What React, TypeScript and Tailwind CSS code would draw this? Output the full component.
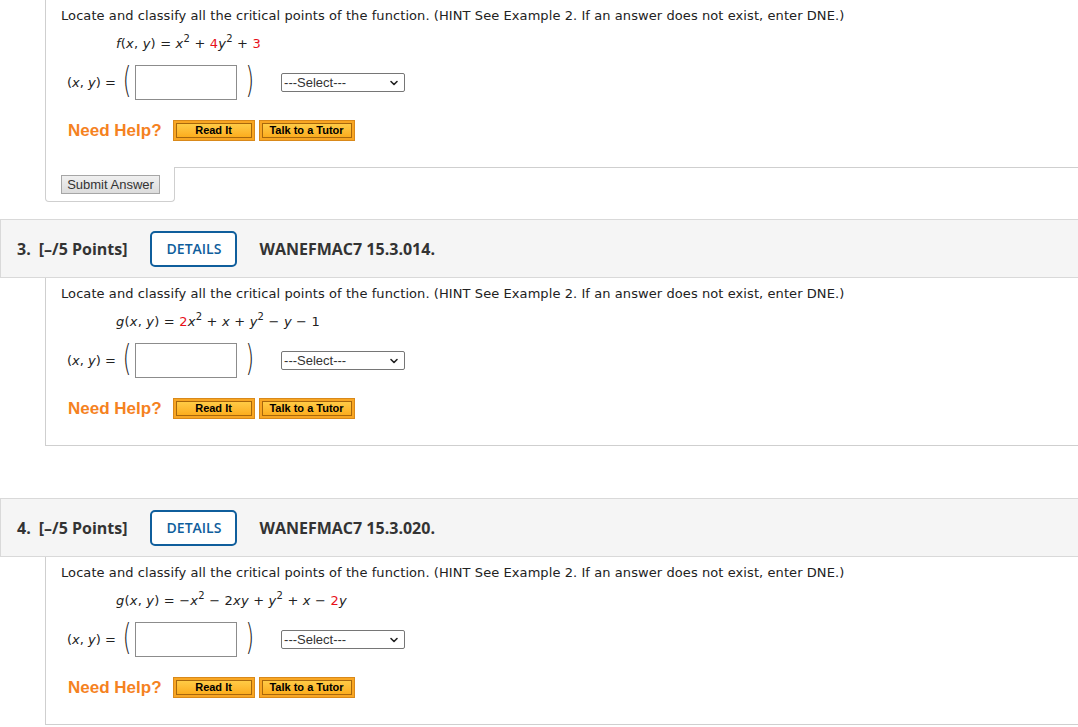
import React from 'react';
import { ChevronDown } from 'lucide-react';

const verdana = { fontFamily: '"DejaVu Sans", Verdana, sans-serif' };

const Red: React.FC<{ children: React.ReactNode }> = ({ children }) => (
  <span className="text-[#e8101a]">{children}</span>
);

const V: React.FC<{ children: React.ReactNode }> = ({ children }) => <i>{children}</i>;

const Sup: React.FC<{ children: React.ReactNode }> = ({ children }) => (
  <sup className="text-[10px] relative -top-[6px]">{children}</sup>
);

const OrangeButton: React.FC<{ label: string; width: string }> = ({ label, width }) => (
  <div className={`${width} h-[21px] border border-[#d9891a] bg-[#f8a623] p-[2px]`}>
    <div className="h-full border border-[#a8670c] bg-gradient-to-b from-[#ffcb45] to-[#fcad1c] flex items-center justify-center text-[11px] font-bold text-black leading-none">
      {label}
    </div>
  </div>
);

const AnswerRow: React.FC = () => (
  <div className="flex items-center ml-[6px] mt-[13px] h-[35px]" style={verdana}>
    <span className="text-[13px] text-[#222]">
      (<V>x</V>, <V>y</V>) =
    </span>
    <span className="ml-[7px] text-[22px] font-light text-[#222] scale-y-160 inline-block leading-none -mt-[3px]">(</span>
    <div className="ml-[4px] w-[102px] h-[35px] border border-[#8c8c8c] bg-white" />
    <span className="ml-[8px] text-[22px] font-light text-[#222] scale-y-160 inline-block leading-none -mt-[3px]">)</span>
    <div
      className="ml-[27px] w-[124px] h-[19px] border border-[#767676] rounded-[2px] bg-white flex items-center justify-between pl-[2px] pr-[4px] text-[13px] text-[#333]"
      style={{ fontFamily: '"Liberation Sans", Arial, sans-serif' }}
    >
      <span>---Select---</span>
      <ChevronDown size={12} strokeWidth={3.2} className="text-[#222]" />
    </div>
  </div>
);

const HelpRow: React.FC = () => (
  <div className="flex items-center ml-[7px] mt-[20px] h-[21px]" style={{ fontFamily: '"Liberation Sans", Arial, sans-serif' }}>
    <span className="text-[17px] font-bold text-[#f5821f] leading-none">Need Help?</span>
    <div className="ml-[11px] flex gap-[4px]">
      <OrangeButton label="Read It" width="w-[82px]" />
      <OrangeButton label="Talk to a Tutor" width="w-[96px]" />
    </div>
  </div>
);

const QuestionBody: React.FC<{ formula: React.ReactNode }> = ({ formula }) => (
  <div className="pl-[15px] pt-[8px]" style={verdana}>
    <p className="text-[13px] leading-[16px] text-[#222] tracking-[0.08px]">
      Locate and classify all the critical points of the function. (HINT See Example 2. If an answer does not exist, enter DNE.)
    </p>
    <p className="ml-[55px] mt-[12px] text-[13px] leading-[16px] text-[#222] whitespace-pre tracking-[0.2px]">{formula}</p>
    <AnswerRow />
    <HelpRow />
  </div>
);

const Header: React.FC<{ num: string; code: string }> = ({ num, code }) => (
  <div
    className="h-[59px] bg-[#f5f5f5] border-y border-l border-[#d9d9d9] flex items-center pl-[16px] text-[16px] font-bold text-[#333]"
    style={{ fontFamily: '"Open Sans", sans-serif' }}
  >
    <span>{num}</span>
    <span className="ml-[8px]">[–/5 Points]</span>
    <div className="ml-[23px] w-[87px] h-[36px] border-2 border-[#0f5e9c] rounded-[5px] bg-white flex items-center justify-center text-[14px] font-semibold text-[#0f5e9c]">
      DETAILS
    </div>
    <span className="ml-[22px]">{code}</span>
  </div>
);

export default function App() {
  return (
    <div className="w-full h-[727px] overflow-hidden bg-white">
      {/* question 2 (tail) */}
      <div className="ml-[45px]">
        <div className="border-l border-[#cfcfcf] pb-[26px]">
          <QuestionBody
            formula={
              <>
                <V>f</V>(<V>x</V>, <V>y</V>) = <V>x</V><Sup>2</Sup> + <Red>4</Red><V>y</V><Sup>2</Sup> + <Red>3</Red>
              </>
            }
          />
        </div>
        <div className="flex">
          <div className="w-[130px] h-[35px] border-l border-r border-b border-[#cfcfcf] rounded-b-[4px] pl-[15px] pt-[8px] flex items-start">
            <button
              className="block h-[19px] w-[99px] border border-[#a6a6a6] bg-gradient-to-b from-[#f0f0f0] to-[#dcdcdc] text-[13px] text-[#333] leading-none"
              style={{ fontFamily: '"Liberation Sans", Arial, sans-serif' }}
            >
              Submit Answer
            </button>
          </div>
          <div className="flex-1 border-t border-[#cfcfcf]" />
        </div>
      </div>

      {/* question 3 */}
      <div className="mt-[17px]">
        <Header num="3." code="WANEFMAC7 15.3.014." />
        <div className="ml-[45px] border-l border-b border-[#cfcfcf] pb-[26px]">
          <QuestionBody
            formula={
              <>
                <V>g</V>(<V>x</V>, <V>y</V>) = <Red>2</Red><V>x</V><Sup>2</Sup> + <V>x</V> + <V>y</V><Sup>2</Sup> − <V>y</V> − 1
              </>
            }
          />
        </div>
      </div>

      {/* question 4 */}
      <div className="mt-[52px]">
        <Header num="4." code="WANEFMAC7 15.3.020." />
        <div className="ml-[45px] border-l border-b border-[#cfcfcf] pb-[26px]">
          <QuestionBody
            formula={
              <>
                <V>g</V>(<V>x</V>, <V>y</V>) = −<V>x</V><Sup>2</Sup> − 2<V>xy</V> + <V>y</V><Sup>2</Sup> + <V>x</V> − <Red>2</Red><V>y</V>
              </>
            }
          />
        </div>
      </div>
    </div>
  );
}
